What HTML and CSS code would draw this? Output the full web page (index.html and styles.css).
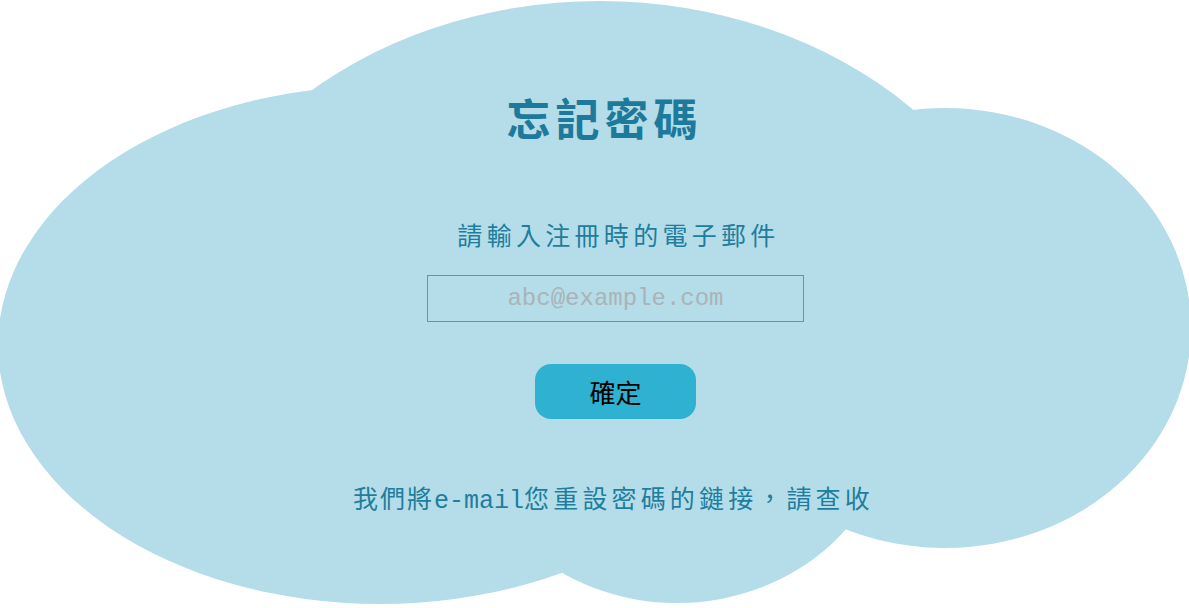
FILE: index.html
```html
<!DOCTYPE html>
<html lang="zh-Hant">
<head>
<meta charset="utf-8">
<title>忘記密碼</title>
<link rel="stylesheet" href="styles.css">
</head>
<body>
<main class="stage">
  <svg class="cloud" viewBox="0 0 1189 608" width="1189" height="608" aria-hidden="true">
    <defs>
      <clipPath id="topclip"><rect x="0" y="0" width="1189" height="240"/></clipPath>
    </defs>
    <g fill="#b4dde9">
      <ellipse cx="380" cy="345" rx="382" ry="259"/>
      <ellipse cx="600" cy="366" rx="440" ry="365" clip-path="url(#topclip)"/>
      <ellipse cx="945" cy="328" rx="246" ry="220"/>
      <ellipse cx="677" cy="403" rx="218" ry="200"/>
      <ellipse cx="650" cy="320" rx="250" ry="150"/>
    </g>
  </svg>
  <section class="panel">
    <h1 class="title">忘記密碼</h1>
    <p class="label">請輸入注冊時的電子郵件</p>
    <input class="email" type="email" placeholder="abc@example.com">
    <button class="confirm" type="button">確定</button>
    <p class="note"><span class="tight">我們將</span><span class="latin">e-mail</span>您重設密碼的鏈接，請查收</p>
  </section>
</main>
</body>
</html>
```

FILE: styles.css
```css
html, body {
  margin: 0;
  padding: 0;
  background: #ffffff;
}

.stage {
  position: relative;
  width: 1189px;
  height: 608px;
  overflow: hidden;
}

.cloud {
  position: absolute;
  left: 0;
  top: 0;
  display: block;
}

.panel {
  position: relative;
  display: flex;
  flex-direction: column;
  align-items: center;
  padding: 95px 0 0 42px;
  font-family: "Noto Sans CJK TC", sans-serif;
}

.title {
  margin: 0 22px 0 0;
  font-size: 44px;
  line-height: 44px;
  font-weight: 700;
  letter-spacing: 5px;
  color: #1d7a9b;
}

.label {
  margin: 83px 0 0 6px;
  font-size: 25px;
  line-height: 25px;
  letter-spacing: 4.3px;
  color: #1f7d9d;
}

.email {
  box-sizing: border-box;
  margin: 28px 0 0;
  width: 377px;
  height: 47px;
  border: 1.5px solid #7e8b90;
  background: transparent;
  text-align: center;
  font-family: "Liberation Mono", monospace;
  font-size: 24px;
  color: #333;
  outline: none;
}

.email::placeholder {
  color: #aab3b7;
}

.confirm {
  margin: 42px 0 0;
  width: 161px;
  height: 55px;
  border: none;
  border-radius: 16px;
  background: #2fb2d2;
  color: #000;
  font-family: "Liberation Serif", "Noto Sans CJK TC", serif;
  font-size: 26px;
  cursor: pointer;
}

.note {
  margin: 70px 4px 0 0;
  font-family: "Liberation Mono", "Noto Sans CJK TC", monospace;
  font-size: 25px;
  line-height: 25px;
  letter-spacing: 4.15px;
  color: #1f7d9d;
}

.tight {
  letter-spacing: 2px;
}

.latin {
  letter-spacing: 0;
}
```
